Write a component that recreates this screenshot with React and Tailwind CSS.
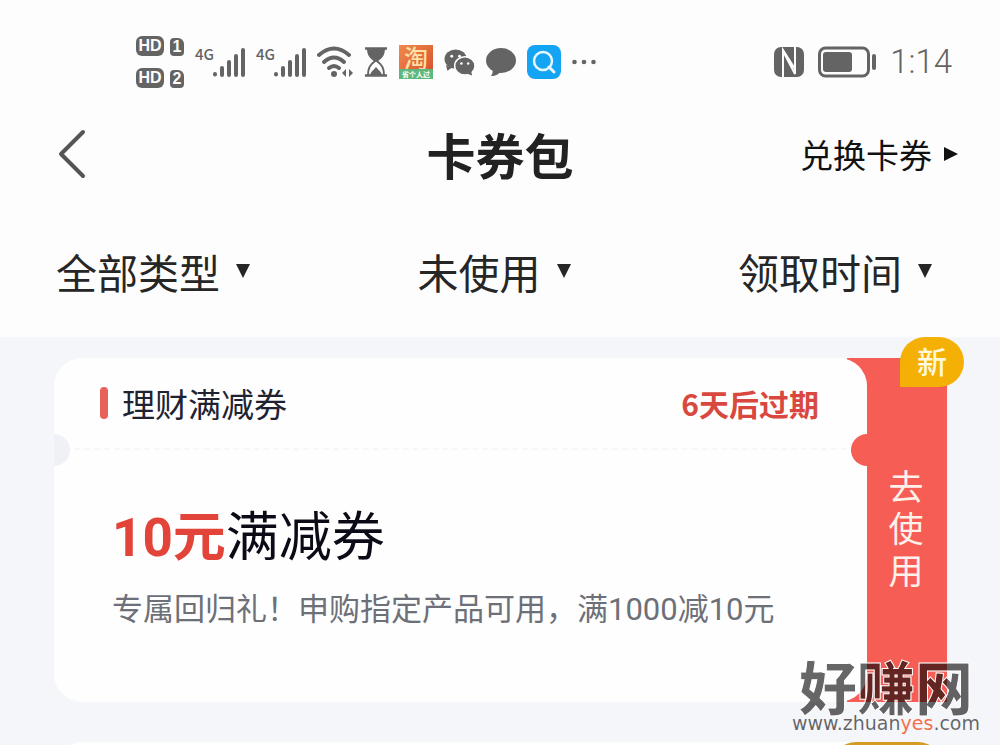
import React, { useState } from 'react';

const FILTERS = [
    { id: 'type', label: '卡券类型', options: ['全部类型'] },
    { id: 'status', label: '使用状态', options: ['未使用'] },
    { id: 'sort', label: '排序方式', options: ['领取时间'] },
];

const COUPON = {
    category: '理财满减券',
    expires: '6天后过期',
    amount: '10元',
    name: '满减券',
    description: '专属回归礼！申购指定产品可用，满1000减10元',
    badge: '新',
    action: '去使用',
};

const HdBadge = ({ sim }) => (
    <div className="flex items-end gap-1.5 font-['Liberation_Sans',sans-serif] font-bold text-[#fdfdfd]">
        <span className="flex h-5 w-7 items-center justify-center rounded-md bg-[#646464] text-[16px] leading-none">HD</span>
        <span className="flex h-[18px] w-3.5 items-center justify-center rounded-sm rounded-tr-md bg-[#646464] text-[16px] leading-none">{sim}</span>
    </div>
);

const Signal = () => (
    <div className="flex h-8 items-start">
        <span className="w-[18px] text-[15px] font-medium leading-4">4G</span>
        <svg className="h-8 w-8" viewBox="0 0 32 32" fill="none" stroke="currentColor" strokeWidth="4" strokeLinecap="round" aria-hidden="true">
            <path d="M2 28v.5M9 22v7M16 16v13M23 10v19M30 4v25" />
        </svg>
    </div>
);

const WifiIcon = () => (
    <svg className="h-8 w-9" viewBox="0 0 36 32" fill="none" aria-hidden="true">
        <path d="M2 9Q17-4 32 9" stroke="currentColor" strokeWidth="4" strokeLinecap="round" />
        <path d="M7 16Q17 7 27 16" stroke="currentColor" strokeWidth="4" strokeLinecap="round" />
        <path d="M12 22Q17 18 22 22" stroke="currentColor" strokeWidth="4" strokeLinecap="round" />
        <circle cx="17" cy="28" r="3" fill="currentColor" />
        <path d="M29 23v8l-4-4zM32 23v8l4-4z" fill="currentColor" />
    </svg>
);

const HourglassIcon = () => (
    <svg className="h-[30px] w-6" viewBox="0 0 24 30" aria-hidden="true">
        <path d="M1 1.500h22M1 28.500h22" stroke="currentColor" strokeWidth="2.500" />
        <path d="M3 1h18c0 8-3 10-8 14h-2C6 11 3 9 3 1z" fill="currentColor" />
        <path d="M11 14c-5 4-7 7-7 14M13 14c5 4 7 7 7 14" fill="none" stroke="currentColor" strokeWidth="2" />
        <path d="M6 28c1-4 3-4 6-8 3 4 5 4 6 8z" fill="currentColor" />
    </svg>
);

const TaobaoIcon = () => (
    <span className="flex h-[34px] w-[34px] flex-col bg-linear-to-br from-[#ef8b4c] to-[#d5482c]">
        <span className="flex h-6 items-center justify-center text-[24px] font-medium leading-none text-[#ffe0a6]">淘</span>
        <span className="flex h-2.5 items-center justify-center bg-[#5cb87c] text-[7px] font-bold leading-none text-white">省个人过</span>
    </span>
);

const WechatIcon = () => (
    <svg className="h-7 w-[31px]" viewBox="0 0 32 28" aria-hidden="true">
        <path d="M2 17l1.500 6 4.500-3z" fill="currentColor" />
        <ellipse cx="12" cy="11" rx="11.500" ry="10" fill="currentColor" />
        <ellipse cx="21.500" cy="18" rx="10.500" ry="9.500" fill="currentColor" stroke="#fdfdfd" strokeWidth="1.500" />
        <path d="M24 26l5 2-1-5z" fill="currentColor" />
        <g fill="#fdfdfd">
            <circle cx="8" cy="8" r="1.500" />
            <circle cx="16" cy="8" r="1.500" />
            <circle cx="18" cy="15.500" r="1.300" />
            <circle cx="25" cy="15.500" r="1.300" />
        </g>
    </svg>
);

const BubbleIcon = () => (
    <svg className="h-[30px] w-[30px]" viewBox="0 0 30 30" fill="currentColor" aria-hidden="true">
        <ellipse cx="15" cy="13.500" rx="15" ry="12.500" />
        <path d="M6 21c1 3 1 5-1 8 5 0 8-2 10-5z" />
    </svg>
);

const SearchAppIcon = () => (
    <svg className="h-[34px] w-[34px]" viewBox="0 0 34 34" fill="none" aria-hidden="true">
        <rect width="34" height="34" rx="8" fill="#14a4f4" />
        <circle cx="16" cy="16" r="9" stroke="#e8f8ff" strokeWidth="2.500" />
        <path d="M22 22l5 5" stroke="#e8f8ff" strokeWidth="3" strokeLinecap="round" />
    </svg>
);

const NfcIcon = () => (
    <svg className="h-[30px] w-[30px]" viewBox="0 0 30 30" aria-hidden="true">
        <rect width="30" height="30" rx="7" fill="currentColor" />
        <path d="M9 31V3l12 19V9M9 9v-5l12 23V-1" fill="none" stroke="#fdfdfd" strokeWidth="2" />
    </svg>
);

const BatteryIcon = () => (
    <svg className="h-8 w-[58px]" viewBox="0 0 58 32" fill="none" aria-hidden="true">
        <rect x="1.500" y="2" width="49" height="28" rx="6" stroke="currentColor" strokeWidth="3" />
        <rect x="5" y="6" width="29" height="20" rx="3" fill="currentColor" />
        <path d="M56 10v12" stroke="currentColor" strokeWidth="4" strokeLinecap="round" />
    </svg>
);

const StatusBar = () => (
    <div className="flex h-[60px] items-center justify-between pl-[136px] pr-12 text-[#646464]">
        <div className="flex items-center gap-[11px]">
            <div className="flex flex-col gap-3">
                <HdBadge sim="1" />
                <HdBadge sim="2" />
            </div>
            <Signal />
            <Signal />
            <WifiIcon />
            <HourglassIcon />
            <TaobaoIcon />
            <WechatIcon />
            <BubbleIcon />
            <SearchAppIcon />
            <svg className="h-1.5 w-6" viewBox="0 0 24 6" fill="currentColor" aria-hidden="true">
                <circle cx="2.500" cy="3" r="2.300" />
                <circle cx="12" cy="3" r="2.300" />
                <circle cx="21.500" cy="3" r="2.300" />
            </svg>
        </div>
        <div className="flex items-center gap-3.5">
            <NfcIcon />
            <BatteryIcon />
            <time className="font-['Roboto',sans-serif] text-[33px] font-light leading-9">1:14</time>
        </div>
    </div>
);

const NavBar = () => (
    <header className="mt-[30px] grid h-16 grid-cols-[1fr_auto_1fr] items-center px-[42px]">
        <button type="button" aria-label="返回" className="justify-self-start pl-4 text-[#555]">
            <svg className="h-[50px] w-7" viewBox="0 0 28 50" fill="none" stroke="currentColor" strokeWidth="4" strokeLinecap="round" strokeLinejoin="round">
                <path d="M25 3L3 25l22 22" />
            </svg>
        </button>
        <h1 className="text-[49px] font-bold leading-[64px] text-[#222]">卡券包</h1>
        <a href="#redeem" className="flex items-center gap-3 justify-self-end text-[33px] leading-10 text-[#111]">
            兑换卡券
            <svg className="h-3.5 w-3.5" viewBox="0 0 14 14" fill="currentColor" aria-hidden="true">
                <path d="M0 0l14 7-14 7z" />
            </svg>
        </a>
    </header>
);

const FilterSelect = ({ filter, value, onChange }) => (
    <label className="flex items-center gap-3 text-[#262626]">
        <span className="sr-only">{filter.label}</span>
        <select
            value={value}
            onChange={(e) => onChange(filter.id, e.target.value)}
            className="h-16 appearance-none field-sizing-content bg-transparent pr-1 text-[41px] leading-[64px]"
        >
            {filter.options.map(option => (
                <option key={option}>{option}</option>
            ))}
        </select>
        <svg className="h-3.5 w-3.5" viewBox="0 0 14 14" fill="currentColor" aria-hidden="true">
            <path d="M0 0h14L7 14z" />
        </svg>
    </label>
);

const CouponCard = ({ coupon }) => (
    <article className="relative flex">
        <section className="relative z-10 flex-1 overflow-hidden rounded-[28px] bg-[#fefefe]">
            <div className="flex h-[90px] items-center justify-between pl-[46px] pr-12">
                <h2 className="flex items-center gap-3.5 text-[33px] leading-10 text-[#20222f]">
                    <span className="h-8 w-2 rounded-full bg-[#e8615a]"></span>
                    {coupon.category}
                </h2>
                <span className="text-[30px] font-bold leading-10 text-[#d9483f]">{coupon.expires}</span>
            </div>
            {/* Perforation with a notch at each end */}
            <div className="relative mx-5 border-t-2 border-dashed border-[#f7f7f9]">
                <span className="absolute -left-9 -top-4 h-8 w-8 rounded-full bg-[#f0f1f6]"></span>
                <span className="absolute -right-9 -top-4 h-8 w-8 rounded-full bg-[#f65d55]"></span>
            </div>
            <div className="px-[58px] pb-[72px] pt-[52px] font-['Roboto','Noto_Sans_CJK_SC',sans-serif]">
                <p className="text-[53px] leading-[72px] text-[#0b0b18]">
                    <strong className="font-bold text-[#e3443a]">{coupon.amount}</strong>
                    {coupon.name}
                </p>
                <p className="mt-4 whitespace-nowrap text-[31px] leading-10 text-[#6d7078]">{coupon.description}</p>
            </div>
        </section>
        <button type="button" className="-ml-5 flex w-[100px] flex-col items-center justify-center bg-[#f65d55] pb-1.5 pl-[18px] text-[35px] leading-[42px] text-[#fff0ea]">
            {coupon.action.split('').map(char => (
                <span key={char}>{char}</span>
            ))}
        </button>
        <span className="absolute -right-[17px] -top-[21px] z-20 flex h-[50px] w-16 items-center justify-center rounded-full rounded-bl-none bg-[#f4b004] pb-1 text-[30px] font-medium leading-none text-[#fff8dc]">
            {coupon.badge}
        </span>
    </article>
);

const Watermark = () => (
    <div className="pointer-events-none absolute bottom-3 right-5 z-30 flex flex-col items-center text-black/60">
        <span className="text-[58px] font-black leading-[56px] [-webkit-text-stroke:1px_white]">好赚网</span>
        <span className="font-['DejaVu_Sans',sans-serif] text-[19px] leading-5">
            www.zhuan<span className="text-[#f4704f]">yes</span>.com
        </span>
    </div>
);

const App = () => {
    const [selected, setSelected] = useState({ type: '全部类型', status: '未使用', sort: '领取时间' });

    const handleFilter = (id, value) => {
        setSelected({ ...selected, [id]: value });
    };

    return (
        <div className="relative flex h-screen flex-col overflow-hidden bg-[#fdfdfd] pt-8 font-['Noto_Sans_CJK_SC',sans-serif]">
            <StatusBar />
            <NavBar />
            <div className="mb-[34px] mt-[53px] flex h-16 items-center justify-between pl-14 pr-[68px]">
                {FILTERS.map(filter => (
                    <FilterSelect key={filter.id} filter={filter} value={selected[filter.id]} onChange={handleFilter} />
                ))}
            </div>

            <main className="flex-1 space-y-10 overflow-hidden bg-[#f5f6fa] pl-[54px] pr-[53px] pt-[21px]">
                <CouponCard coupon={COUPON} />
                {/* Next card, mostly below the fold */}
                <div className="relative h-80 rounded-[28px] bg-[#fefefe]">
                    <span className="absolute right-1 top-0 h-[50px] w-28 rounded-full rounded-bl-none bg-[#d29c20]"></span>
                </div>
            </main>
            <Watermark />
        </div>
    );
};

export default App;
